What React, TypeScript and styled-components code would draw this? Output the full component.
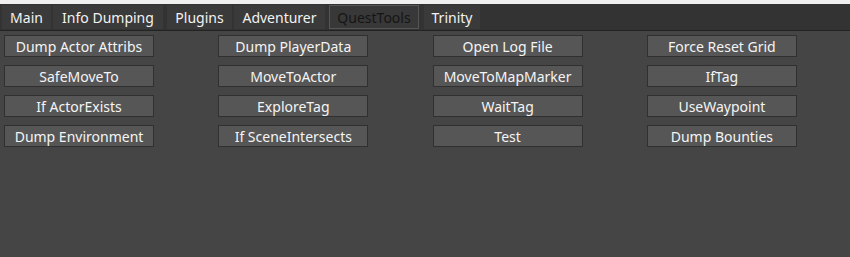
import React from "react";
import styled, { createGlobalStyle } from "styled-components";

const Global = createGlobalStyle`
  html, body { margin: 0; padding: 0; background: #454545; }
  body { font-family: "Noto Sans", "Open Sans", sans-serif; }
`;

const Page = styled.div`
  width: 850px;
  height: 257px;
  display: flex;
  flex-direction: column;
  background: #454545;
  overflow: hidden;
`;

const TopStrip = styled.div`
  height: 4px;
  background: #f0f0f0;
  flex: none;
`;

const TabBar = styled.div`
  background: #333333;
  border-bottom: 1px solid #232323;
  display: flex;
  align-items: flex-start;
  padding: 1px 0 0 2px;
  box-sizing: border-box;
  height: 27px;
  flex: none;
`;

const Tab = styled.div<{ $w: number; $active?: boolean; $gap: number }>`
  width: ${(p) => p.$w}px;
  margin-right: ${(p) => p.$gap}px;
  height: 24px;
  box-sizing: border-box;
  display: flex;
  align-items: center;
  justify-content: center;
  font-size: 14px;
  padding-top: 1px;
  color: ${(p) => (p.$active ? "#151515" : "#f2f2f2")};
  background: ${(p) => (p.$active ? "#383838" : "#3a3a3a")};
  border: 1px solid ${(p) => (p.$active ? "#555555" : "#3a3a3a")};
`;

const Panel = styled.div`
  flex: 1;
  background: #454545;
  padding: 4px 0 0 4px;
  display: grid;
  grid-template-columns: repeat(4, 150px);
  grid-auto-rows: 22px;
  column-gap: 64.3px;
  row-gap: 8px;
  align-content: start;
`;

const Button = styled.div`
  box-sizing: border-box;
  height: 22px;
  background: #565656;
  border: 1px solid #303030;
  color: #f4f4f4;
  font-size: 14px;
  padding-top: 1px;
  display: flex;
  align-items: center;
  justify-content: center;
  white-space: nowrap;
`;

const tabs: { label: string; w: number; gap: number; active?: boolean }[] = [
  { label: "Main", w: 49, gap: 2 },
  { label: "Info Dumping", w: 110, gap: 4 },
  { label: "Plugins", w: 65, gap: 2 },
  { label: "Adventurer", w: 91, gap: 4 },
  { label: "QuestTools", w: 90, gap: 5, active: true },
  { label: "Trinity", w: 56, gap: 0 },
];

const buttons = [
  "Dump Actor Attribs",
  "Dump PlayerData",
  "Open Log File",
  "Force Reset Grid",
  "SafeMoveTo",
  "MoveToActor",
  "MoveToMapMarker",
  "IfTag",
  "If ActorExists",
  "ExploreTag",
  "WaitTag",
  "UseWaypoint",
  "Dump Environment",
  "If SceneIntersects",
  "Test",
  "Dump Bounties",
];

export default function App() {
  return (
    <Page>
      <Global />
      <TopStrip />
      <TabBar>
        {tabs.map((t) => (
          <Tab key={t.label} $w={t.w} $gap={t.gap} $active={t.active}>
            {t.label}
          </Tab>
        ))}
      </TabBar>
      <Panel>
        {buttons.map((b) => (
          <Button key={b}>{b}</Button>
        ))}
      </Panel>
    </Page>
  );
}
